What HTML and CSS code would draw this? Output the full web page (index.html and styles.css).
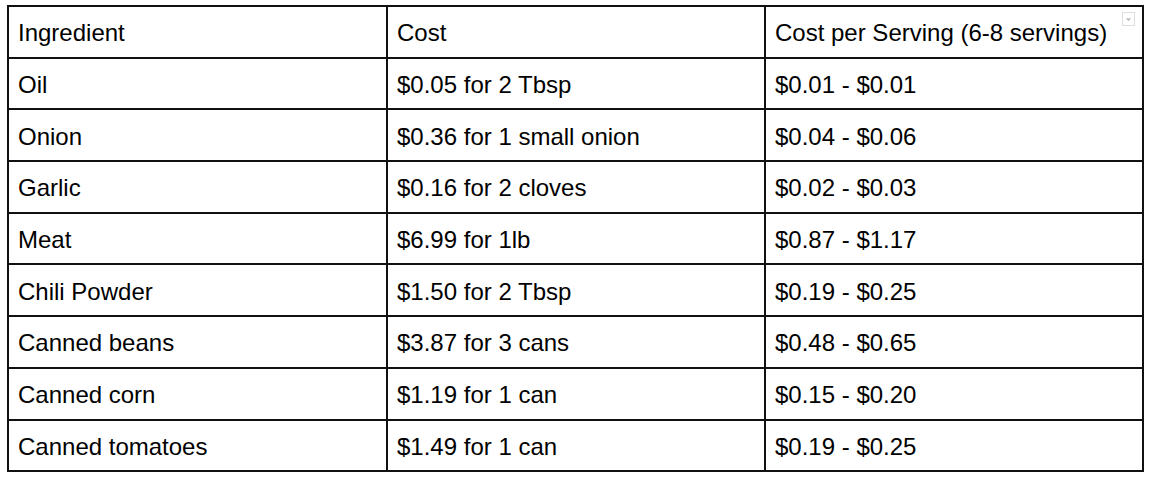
FILE: index.html
```html
<!DOCTYPE html>
<html lang="en">
<head>
<meta charset="utf-8">
<title>Ingredient costs</title>
<link rel="stylesheet" href="styles.css">
</head>
<body>
<div class="page">
  <table class="costs">
    <colgroup>
      <col class="c1"><col class="c2"><col class="c3">
    </colgroup>
    <tr>
      <td>Ingredient</td>
      <td>Cost</td>
      <td class="head-last">Cost per Serving (6-8 servings)<span class="dd" aria-hidden="true"><svg width="12" height="13" viewBox="0 0 12 13"><path d="M3 5 L9 5 L6 8.5 Z" fill="#bdbdbd"/></svg></span></td>
    </tr>
    <tr><td>Oil</td><td>$0.05 for 2 Tbsp</td><td>$0.01 - $0.01</td></tr>
    <tr><td>Onion</td><td>$0.36 for 1 small onion</td><td>$0.04 - $0.06</td></tr>
    <tr><td>Garlic</td><td>$0.16 for 2 cloves</td><td>$0.02 - $0.03</td></tr>
    <tr><td>Meat</td><td>$6.99 for 1lb</td><td>$0.87 - $1.17</td></tr>
    <tr><td>Chili Powder</td><td>$1.50 for 2 Tbsp</td><td>$0.19 - $0.25</td></tr>
    <tr><td>Canned beans</td><td>$3.87 for 3 cans</td><td>$0.48 - $0.65</td></tr>
    <tr><td>Canned corn</td><td>$1.19 for 1 can</td><td>$0.15 - $0.20</td></tr>
    <tr><td>Canned tomatoes</td><td>$1.49 for 1 can</td><td>$0.19 - $0.25</td></tr>
  </table>
</div>
</body>
</html>
```
FILE: styles.css
```css
html, body {
  margin: 0;
  padding: 0;
  background: #ffffff;
}

.page {
  padding: 5px 0 0 7px;
}

.costs {
  border-collapse: separate;
  border-spacing: 0;
  table-layout: fixed;
  width: 1137px;
  border-top: 2px solid #111;
  border-left: 2px solid #111;
  font-family: "Liberation Sans", Arial, sans-serif;
  font-size: 24px;
  color: #000;
}

.c1 { width: 379px; }
.c2 { width: 378px; }
.c3 { width: 378px; }

.costs td {
  box-sizing: border-box;
  height: 51.7px;
  padding: 3px 8px 0 9px;
  border-right: 2px solid #111;
  border-bottom: 2px solid #111;
  vertical-align: middle;
  white-space: nowrap;
  line-height: normal;
}

.head-last {
  position: relative;
}

.dd {
  position: absolute;
  top: 5px;
  right: 7px;
  width: 13px;
  height: 14px;
  border: 1px solid #dedede;
  box-sizing: border-box;
  display: flex;
  align-items: center;
  justify-content: center;
}

.dd svg {
  display: block;
}
```
